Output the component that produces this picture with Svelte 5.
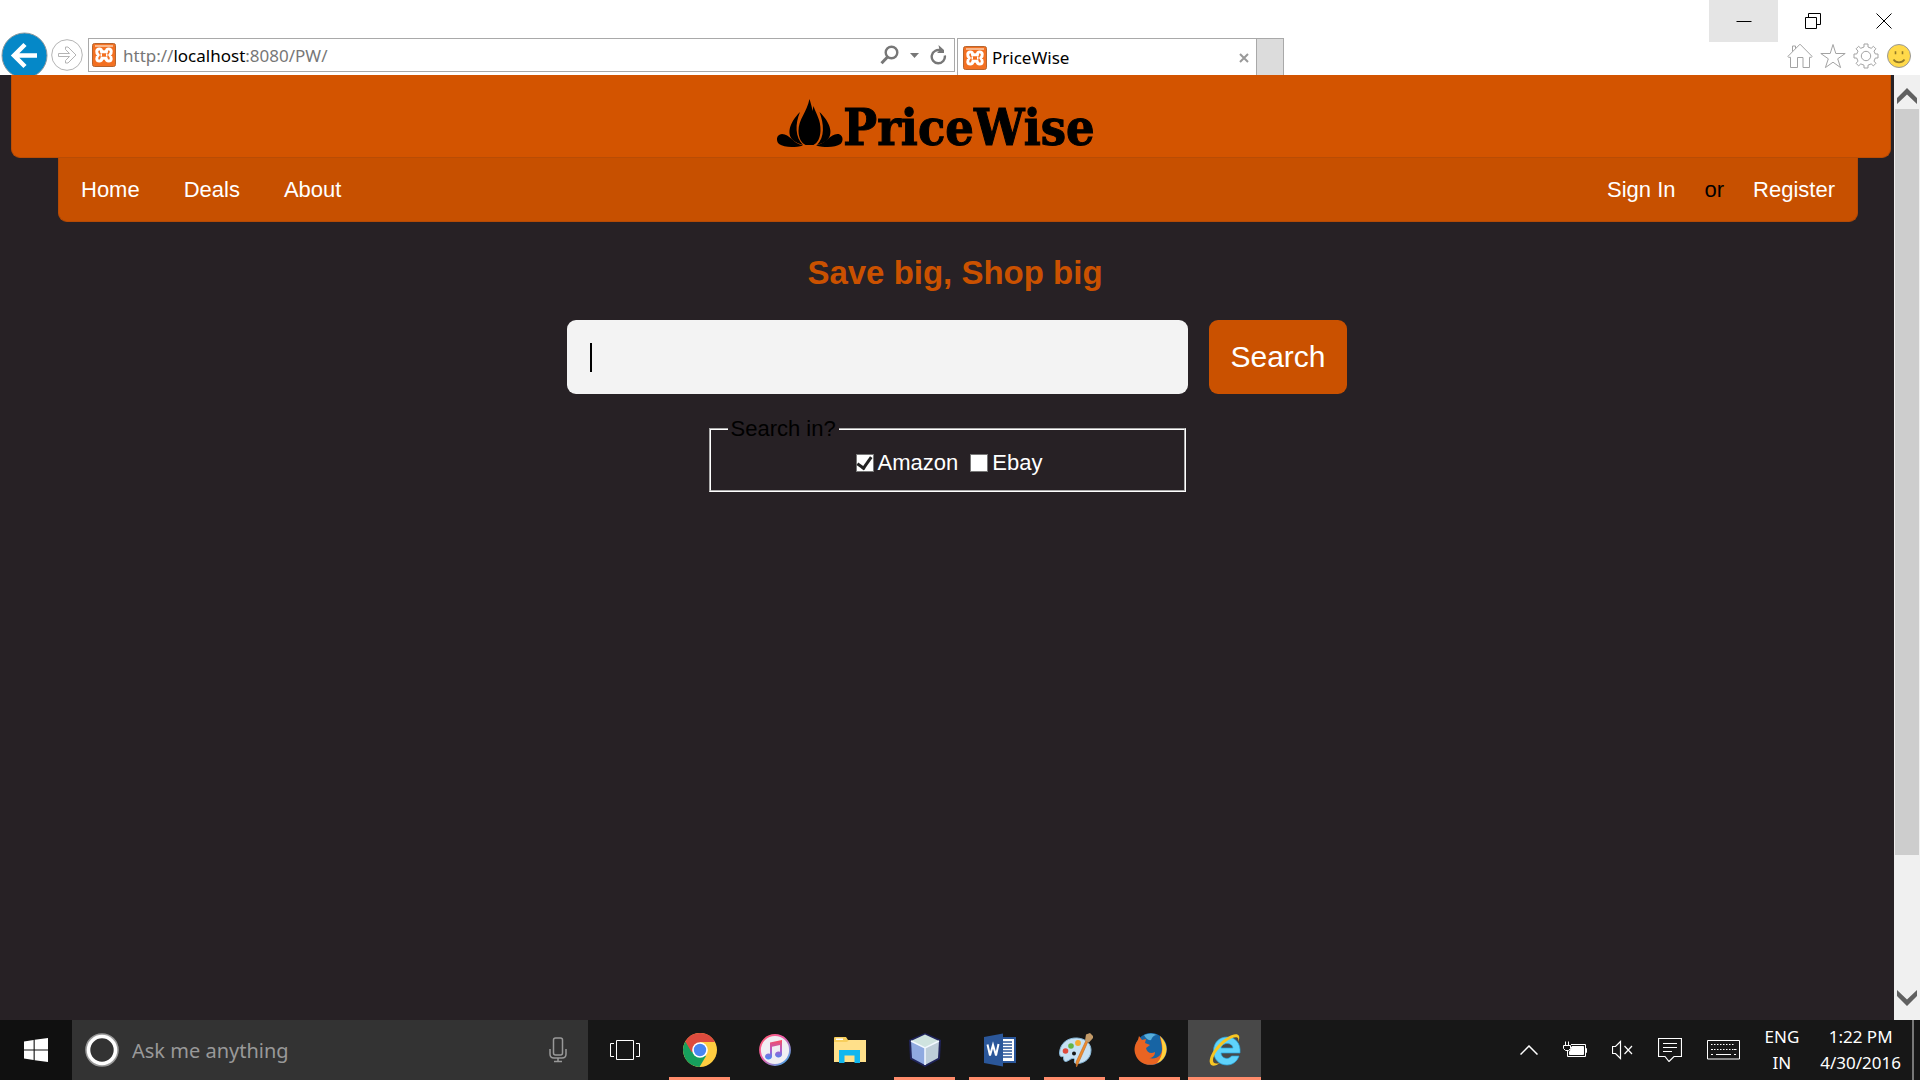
<script>
  const tools = ['Home', 'Favorites', 'Tools', 'Feedback'];
  const apps = ['Chrome', 'iTunes', 'File Explorer', 'NetBeans', 'Word', 'Paint', 'Firefox', 'Internet Explorer'];
  const idle = ['iTunes', 'File Explorer'];
  const dots = [7, 10, 13, 16, 19, 22, 25, 28];
</script>

{#snippet favicon()}
  <svg class="favicon" viewBox="0 0 24 24" aria-hidden="true">
    <rect x=".5" y=".5" width="23" height="23" rx="2" fill="#f37021" stroke="#b5652f" />
    <path d="M3 2h18v2H3z" fill="#f9b78a" />
    <path d="M9.500 8.700C9.800 6.800 8.800 5.900 7.200 5.900 4.200 5.900 4 9.700 6.300 12 4 14.300 4.200 18.100 7.200 18.100c2 0 2.600-1.500 2.600-2.800h4.400c0 1.300.6 2.800 2.600 2.800 3 0 3.200-3.800.9-6.100 2.300-2.300 2.100-6.100-.9-6.100-1.600 0-2.600.9-2.300 2.800zM8.500 12h1.500m4 0h1.500" fill="none" stroke="#fff" stroke-width="3" stroke-linejoin="round" />
  </svg>
{/snippet}

<div class="window">
  <header class="chrome">
    <div class="caption">
      <button class="min" aria-label="Minimize"><svg width="16" height="16" viewBox="0 0 16 16"><path d="M.5 8.500h15" /></svg></button>
      <button aria-label="Restore"><svg width="16" height="16" viewBox="0 0 16 16"><path d="M.5 4.500h11v11H.5zM3.500 4.500v-4h12v11h-4" /></svg></button>
      <button aria-label="Close"><svg width="16" height="16" viewBox="0 0 16 16"><path d="M.5.5l15 15m0-15l-15 15" /></svg></button>
    </div>
    <div class="toolbar">
      <button class="back" aria-label="Back">
        <svg width="48" height="48" viewBox="0 0 48 48"><circle cx="24.500" cy="23.500" r="22.500" fill="#0588c8" stroke="#8d9a9f" /><path d="M37 23.500H15M25 12.500l-11 11 11 11" fill="none" stroke="#fff" stroke-width="4.500" /></svg>
      </button>
      <button class="forward" aria-label="Forward">
        <svg width="32" height="32" viewBox="0 0 32 32" fill="#fff" stroke="#b4b4b4"><circle cx="16" cy="16" r="15.300" /><path d="M7.500 14.500h11l-4-4V8h2.500l8 8-8 8h-2.500v-2.500l4-4h-11z" /></svg>
      </button>
      <div class="address">
        {@render favicon()}
        <a class="url" href="#top">http://<b>localhost</b>:8080/PW/</a>
        <button aria-label="Search the web"><svg width="19" height="20" viewBox="0 0 19 20" fill="none" stroke="#777"><circle cx="11.500" cy="7.500" r="5.800" stroke-width="2.400" /><path d="M7.500 12L1.500 18.300" stroke-width="3" /></svg></button>
        <button aria-label="Show address list"><svg width="9" height="5" viewBox="0 0 9 5"><path d="M0 0h9L4.500 5z" fill="#777" /></svg></button>
        <button aria-label="Refresh"><svg width="17" height="20" viewBox="0 0 17 20"><path d="M11 5.600A6.600 6.600 0 1 0 14.800 10.500" fill="none" stroke="#777" stroke-width="2.400" /><path d="M8.500 0l5.500 5v3H7l2.500-2.500z" fill="#777" /></svg></button>
      </div>
      <div class="tab">
        {@render favicon()}
        <span>PriceWise</span>
        <button aria-label="Close tab"><svg width="10" height="10" viewBox="0 0 10 10"><path d="M1 1l8 8m0-8L1 9" stroke="#999" stroke-width="2" /></svg></button>
      </div>
      <button class="newtab" aria-label="New tab"></button>
      <div class="tools">
        {#each tools as tool}
          <button aria-label={tool}>
            <svg width="26" height="26" viewBox="0 0 26 26" fill="#fff" stroke="#a3a3a3">
              {#if tool === 'Home'}
                <path d="M.8 13.500L13 1.200l12.200 12.300-1 .8h-1.700v10.200H16v-10h-5.500v10H3.500V14.300H1.800zM5.500 8.700V3h3v2.700" />
              {:else if tool === 'Favorites'}
                <path d="M13 1.500l2.800 9h9.400l-7.500 5.300 2.900 8.800L13 19.200l-7.600 5.400 2.900-8.800L.8 10.500h9.400z" />
              {:else if tool === 'Tools'}
                <path d="M11 1h4v3l3.200 1.300 2.200-2 2.500 2.500-1.900 2.300L22.300 11H25v4h-2.700L21 18.100l1.900 2.200-2.500 2.600-2.200-2L15 22.200V25h-4v-2.800l-3.200-1.300-2.200 2-2.500-2.600L5 18.100 3.700 15H1v-4h2.700L5 8.100 3.100 5.800l2.500-2.500 2.200 2L11 4z" /><circle cx="13" cy="13" r="4.700" />
              {:else}
                <circle cx="13" cy="13" r="11.500" fill="#ffd94a" stroke="#999" /><path d="M9.500 8.200v3m7-3v3M7.500 16.500c2.500 3.800 8.500 3.800 11 0" fill="none" stroke="#927a28" stroke-width="1.600" />
              {/if}
            </svg>
          </button>
        {/each}
      </div>
    </div>
  </header>

  <div class="viewport" id="top">
    <div class="page">
      <div class="banner">
        <a class="logo" href="#top">
          <svg width="66" height="50" viewBox="0 0 66 50" aria-hidden="true">
            <path d="M32.500 0C34 5 35 8 35.500 12L36.500 7C39 15 44 21 43.500 32c-.3 7-3 12-7 14h-8c-4-2-7-7-7-14C21.500 20 30 13 32.500 0z" />
            <path d="M23 13C12 24 9 36 17 42q3 2.500 9 4C18 38 18 25 23 13zM42.500 13C54 24 57 36 49 42q-3 2.500-9 4C48 38 47 25 42.500 13z" />
            <path d="M26 46.500C15 44 13 35 5 35-.5 35-1.500 42 2 45c5 3.500 15 4 24 1.500zM39 46.500C50 44 53 35 60.500 35c5.500 0 6.500 7 3 10-5 3.500-15 4-24.500 1.500z" />
          </svg>
          <span>PriceWise</span>
        </a>
      </div>
      <nav>
        <a href="#home">Home</a>
        <a href="#deals">Deals</a>
        <a href="#about">About</a>
        <a class="sign" href="#signin">Sign In</a>
        <span>or</span>
        <a href="#register">Register</a>
      </nav>
      <main>
        <h1>Save big, Shop big</h1>
        <form>
          <div class="search">
            <div class="field"><input type="text" aria-label="Search products" /><i></i></div>
            <button type="button">Search</button>
          </div>
          <fieldset>
            <legend>Search in?</legend>
            <div class="stores">
              <label><input type="checkbox" checked />Amazon</label>
              <label><input type="checkbox" />Ebay</label>
            </div>
          </fieldset>
        </form>
      </main>
    </div>
    <div class="scrollbar">
      <button aria-label="Scroll up"><svg width="20" height="16" viewBox="0 0 20 16"><path d="M0 10L10 0l10 10v6L10 6.500 0 16z" fill="#606060" /></svg></button>
      <div class="track"><div class="thumb"></div></div>
      <button aria-label="Scroll down"><svg width="20" height="16" viewBox="0 0 20 16"><path d="M0 0l10 9.500L20 0v6L10 16 0 6z" fill="#606060" /></svg></button>
    </div>
  </div>

  <footer class="taskbar">
    <button class="start" aria-label="Start"><svg width="24" height="24" viewBox="0 0 24 24" fill="#fff"><path d="M0 3.400L9.600 2v9.400H0zM10.700 1.800L24 0v11.400H10.700zM0 12.500h9.600V22L0 20.600zM10.700 12.500H24V24l-13.300-1.800z" /></svg></button>
    <div class="cortana">
      <svg width="34" height="34" viewBox="0 0 34 34" fill="none"><circle cx="17" cy="17" r="15.800" stroke="#999" stroke-width="2" /><circle cx="17" cy="17" r="13.500" stroke="#fff" stroke-width="3.600" /></svg>
      <input type="text" placeholder="Ask me anything" aria-label="Ask me anything" />
      <button aria-label="Speak"><svg width="18" height="26" viewBox="0 0 18 26" fill="none" stroke="#999" stroke-width="1.500"><rect x="4.500" y="1" width="9" height="17" rx="2" /><path d="M1 12v5q0 4 4 4h8q4 0 4-4v-5M9 21v3.500M5 24.500h8" /></svg></button>
    </div>
    <div class="apps">
      <button class="app" aria-label="Task view"><svg width="30" height="20" viewBox="0 0 30 20" fill="none" stroke="#fff"><path d="M6.500.5h17v19h-17zM4 3.500H.5v13H4M26 3.500h3.500v13H26" /></svg></button>
      {#each apps as app}
        <button class="app" class:open={!idle.includes(app)} class:active={app === 'Internet Explorer'} aria-label={app}>
          <svg width="36" height="36" viewBox="0 0 36 36">
            {#if app === 'Chrome'}
              <circle cx="18" cy="18" r="17" fill="#ffcd40" />
              <path d="M18 18L3.300 9.500A17 17 0 0 0 17.500 35l6.500-11z" fill="#169f5c" />
              <path d="M18 18L9.500 20 3.300 9.500A17 17 0 0 1 33 10H18z" fill="#dd4b3e" />
              <circle cx="18" cy="18" r="7.800" fill="#fff" /><circle cx="18" cy="18" r="6.200" fill="#4886f1" />
            {:else if app === 'iTunes'}
              <defs>
                <linearGradient id="ring" x1="0" y1="0" x2="1" y2="1"><stop stop-color="#ff5d6d" /><stop offset=".45" stop-color="#ef5fae" /><stop offset="1" stop-color="#2cb7f6" /></linearGradient>
                <linearGradient id="note" x1="0" y1="0" x2="0" y2="1"><stop stop-color="#fb4d5e" /><stop offset=".5" stop-color="#b45ac8" /><stop offset="1" stop-color="#418cf4" /></linearGradient>
              </defs>
              <circle cx="18" cy="18" r="15" fill="#f0eef3" stroke="url(#ring)" stroke-width="1.800" />
              <path d="M13 10.500L25 8v14.500a3.500 3 0 1 1-2-2.700V13l-8 1.700V24.500A3.500 3 0 1 1 13 21.800z" fill="url(#note)" />
            {:else if app === 'File Explorer'}
              <path d="M2 6q0-1 1-1h11l2 3h17q1 0 1 1v21H2z" fill="#f8cf5d" /><path d="M2 10h13l2-2h17v22H2z" fill="#ffe08a" /><path d="M4 6.500h7v1.500H4z" fill="#fff" />
              <path d="M7 18h21v13h-5.500v-7.500h-10V31H7z" fill="#12b7ef" />
            {:else if app === 'NetBeans'}
              <path d="M18 1L34 8l-1 19-15 8L3 27 2 8z" fill="#20245a" />
              <path d="M18 2.500L32 9l-14 7L4 9z" fill="#cfe3df" /><path d="M4 9l14 7v17L5 26z" fill="#8fa9e0" /><path d="M32 9l-14 7v17l13-7z" fill="#bdcdd8" /><path d="M4 9l14 7 14-7M18 16v17" fill="none" stroke="#f2f8ff" stroke-width="1.500" />
            {:else if app === 'Word'}
              <path d="M19 5h15v26H19z" fill="#2b579a" /><path d="M20 7h12v22H20z" fill="#fff" /><path d="M20 10h10M20 13h10M20 16h10M20 19h10M20 22h10M20 25h10" stroke="#2b579a" stroke-width="1.300" />
              <path d="M2 5l19-3.500v33L2 31z" fill="#2b579a" /><path d="M5.500 12.500l2.500 11 3-10.500 3 10.500 2.500-11.500" fill="none" stroke="#fff" stroke-width="2" />
            {:else if app === 'Paint'}
              <path d="M2.500 21C3 11 11 5.500 20 6c9 .5 14 6 14 12 0 8-6 13.500-14 13.500-2.500 0-3-1-2.500-2.500.5-2-.5-3-2.500-2.500-2 .5-4 3-6.500 3S7 24.500 6 24.500 2.800 26 2.500 21z" fill="#c6e1f3" stroke="#87b7d8" />
              <circle cx="8.500" cy="19" r="2.800" fill="#df4b3c" /><circle cx="14" cy="14" r="2.800" fill="#63b545" /><circle cx="21" cy="11" r="2.900" fill="#f4ac30" /><circle cx="17" cy="21.500" r="2" fill="#171717" />
              <path d="M31 9.500L21 32l-1.500 3-.5-5 10-21.500z" fill="#ed8c2d" stroke="#bd6724" stroke-width=".6" /><path d="M28 8.500l1-6 4-1.500 4 4-5 5.500z" fill="#c29a68" />
            {:else if app === 'Firefox'}
              <circle cx="19" cy="17" r="16" fill="#1764a4" /><path d="M12 3q7-3 13 0-4 0-6 5-4 1-7-5z" fill="#57aeda" />
              <path d="M28 4c9 8 8 19 1 25-9 7-21 4-25-5-3-7-1-12 2-16l1-4 3 4 4-1-1 4 5 2-4 3c1 5 5 6 9 4 0 4-3 6-6 6 8 2 13-3 13-9 0-5-2-10-2-13z" fill="#e96422" />
              <path d="M28 4c9 8 8 19 1 25q-2 1.500-4 2c6-6 7-16 3-27z" fill="#ffd23c" />
            {:else}
              <path d="M33 21H14c.5 6 8 7 10.500 3H32C30 30 25 33 20 33 12 33 6.500 27 6.500 19S12 5 20 5s14 6 13 16zM14 16h12c-.5-6-11-6-12 0z" fill="#5fd3fb" stroke="#2aa5dc" stroke-width=".7" />
              <path d="M31 10C35 2 29 0 21 5 10 11 1 25 3 31c1 4 6 3 10 0-4 1-7 1-7-3 0-5 7-14 14-19 6-4 13-6 11 1z" fill="#f7c623" />
            {/if}
          </svg>
        </button>
      {/each}
    </div>
    <div class="tray">
      <button aria-label="Show hidden icons"><svg width="18" height="10" viewBox="0 0 18 10"><path d="M.5 9.500L9 1l8.500 8.500" stroke-width="1.500" /></svg></button>
      <button aria-label="Battery"><svg width="24" height="18" viewBox="0 0 24 18"><path d="M8 3.500h14.500v12H4.500V10M22.500 7.500h1v4h-1" /><path d="M9 5.500h11.500v8H6.500V11z" fill="#fff" /><path d="M2.500 4V.5M5.500 4V.5M.5 4.500h7v3l-2 2h-3l-2-2z" fill="#171717" /></svg></button>
      <button aria-label="Muted"><svg width="21" height="20" viewBox="0 0 21 20"><path d="M8.500 1.500v17l-5-5h-3v-7h3zM12.500 6l7.500 8m0-8l-7.500 8" stroke-width="1.200" /></svg></button>
      <button aria-label="Notifications"><svg width="24" height="24" viewBox="0 0 24 24"><path d="M.5.5h23v18H16l-5 5-4-5H.5zM5 5.500h14M5 9.500h14M5 13.500h9" stroke-width="1.200" /></svg></button>
      <button aria-label="Touch keyboard"><svg width="33" height="20" viewBox="0 0 33 20"><path d="M.5.5h32v18.500H.5zM4 14.500h2m3 0h15m3 0h2M4 9.500h2m21 0h2" />{#each dots as x}<path d="M{x - 3} 4.500h1.500M{x} 9.500h1.500" />{/each}</svg></button>
      <button class="stack lang"><span>ENG</span><span>IN</span></button>
      <button class="stack clock"><span>1:22 PM</span><span>4/30/2016</span></button>
      <button class="desktop" aria-label="Show desktop"></button>
    </div>
  </footer>
</div>

<style>
  :global(body) { background: #272125; }
  * { box-sizing: border-box; }
  svg { display: block; flex: none; }
  button { border: 0; padding: 0; background: none; font: inherit; color: inherit; display: flex; align-items: center; justify-content: center; flex: none; }
  a { color: inherit; text-decoration: none; }
  .window { min-height: 100vh; display: flex; flex-direction: column; font-family: "Noto Sans", "Open Sans", sans-serif; }

  .chrome { background: #fff; height: 75px; overflow: hidden; }
  .caption { display: flex; justify-content: flex-end; height: 32px; }
  .caption button { width: 69px; height: 42px; }
  .caption button:last-child { width: 73px; }
  .caption .min { background: #e5e5e5; }
  .caption svg { fill: none; stroke: #000; }
  .toolbar { display: flex; align-items: flex-start; }
  .back { margin-right: 3px; }
  .forward { margin: 7px 5px 0 0; }
  .address, .tab, .newtab { border: 1px solid #a9a9a9; margin-top: 6px; display: flex; align-items: center; }
  .address { flex: 0 1 867px; height: 34px; padding: 0 7px 0 3px; gap: 11px; }
  .favicon { width: 24px; height: 24px; }
  .url { flex: 1; margin-left: -4px; font-size: 17px; line-height: 24px; color: #777; padding-top: 2px; }
  .url b { font-weight: 400; color: #000; }
  .tab { flex: 0 1 300px; height: 38px; margin-left: 2px; padding: 0 7px 0 5px; gap: 5px; border-bottom: 0; }
  .tab span { flex: 1; font-size: 17px; line-height: 24px; }
  .newtab { width: 27px; height: 38px; background: #dcdcdc; border-left: 0; }
  .tools { display: flex; gap: 7px; margin: 11px 8px 0 auto; }

  .viewport { flex: 1; display: flex; background: #272125; }
  .page { flex: 1; font-family: "Liberation Sans", Arial, sans-serif; font-size: 22px; line-height: 26px; }
  .banner { margin: 0 3px 0 11px; height: 83px; background: #d35400; border: 1px solid #b94c04; border-top: 0; border-radius: 0 0 9px 9px; display: flex; justify-content: center; padding: 24px 30px 0 0; }
  .logo { display: flex; align-items: flex-start; color: #000; }
  .logo span { font: 700 50px/58px "DejaVu Serif Condensed", "DejaVu Serif", serif; -webkit-text-stroke: 1px #000; }
  nav { margin: 0 36px 0 58px; height: 64px; background: #c75000; border: 1px solid #b54a05; border-top: 0; border-radius: 0 0 9px 9px; display: flex; align-items: center; padding: 0 22px; gap: 44px; color: #fff; }
  nav .sign { margin-left: auto; }
  nav .sign, nav span { margin-right: -15px; }
  nav span { color: #000; }
  main { padding-top: 32px; }
  h1 { margin: 0; padding-left: 16px; text-align: center; font-size: 33px; line-height: 38px; color: #ca5100; }
  .search { display: flex; justify-content: center; gap: 21px; margin-top: 28px; padding-left: 20px; }
  .field { position: relative; flex: 0 1 621px; }
  .field input { width: 100%; height: 74px; border: 0; border-radius: 9px; padding: 0 22px; background: #f3f3f3; font: inherit; font-size: 30px; outline: 0; }
  .field i { position: absolute; left: 23px; top: 23px; width: 2px; height: 29px; background: #000; }
  .search button { height: 74px; width: 138px; border-radius: 9px; background: #ca5100; color: #fff; font-size: 30px; line-height: 36px; }
  fieldset { width: 477px; margin: 22px auto 0; padding: 0 13px 14px 17px; border: 2px groove #fff; }
  legend { padding: 0 3px; line-height: 26px; color: #000; }
  .stores { display: flex; justify-content: center; gap: 12px; color: #fff; padding-top: 8px; }
  label { display: flex; align-items: center; gap: 4px; }
  label input { appearance: none; width: 18px; height: 18px; margin: 0; background: #fff; border: 1px solid #777; display: grid; place-items: center; }
  label input:checked::after { content: ""; width: 6px; height: 12px; border: solid #222; border-width: 0 3px 3px 0; rotate: 35deg; margin-top: -3px; }

  .scrollbar { width: 26px; background: #f0f0f0; display: flex; flex-direction: column; }
  .scrollbar button { height: 34px; padding-top: 8px; }
  .scrollbar button:last-child { height: 44px; padding-top: 0; }
  .track { flex: 1; padding: 0 1px; }
  .thumb { height: 86%; background: #cdcdcd; }

  .taskbar { height: 60px; background: #171717; color: #fff; display: flex; }
  .start { width: 72px; background: #101010; }
  .cortana { flex: 0 1 516px; min-width: 200px; background: #333; display: flex; align-items: center; padding: 0 21px 0 13px; gap: 13px; }
  .cortana input { flex: 1; min-width: 0; padding: 2px 0 0; border: 0; background: none; font: inherit; font-size: 20px; line-height: 28px; color: #fff; }
  .cortana input::placeholder { color: #999; opacity: 1; }
  .apps { display: flex; gap: 2px; }
  .app { width: 73px; position: relative; }
  .app.open::after { content: ""; position: absolute; left: 6px; right: 6px; bottom: 0; height: 3px; background: #ff8c6b; }
  .app.active { background: #484848; }
  .app.active::after { left: 0; right: 0; }
  .tray { margin-left: auto; display: flex; align-items: center; gap: 25px; }
  .tray svg { fill: none; stroke: #fff; }
  .stack { flex-direction: column; font-size: 17px; line-height: 26px; }
  .clock { margin: 0 -14px 0 -4px; }
  .desktop { width: 8px; height: 60px; border-left: 2px solid #777; }
</style>
